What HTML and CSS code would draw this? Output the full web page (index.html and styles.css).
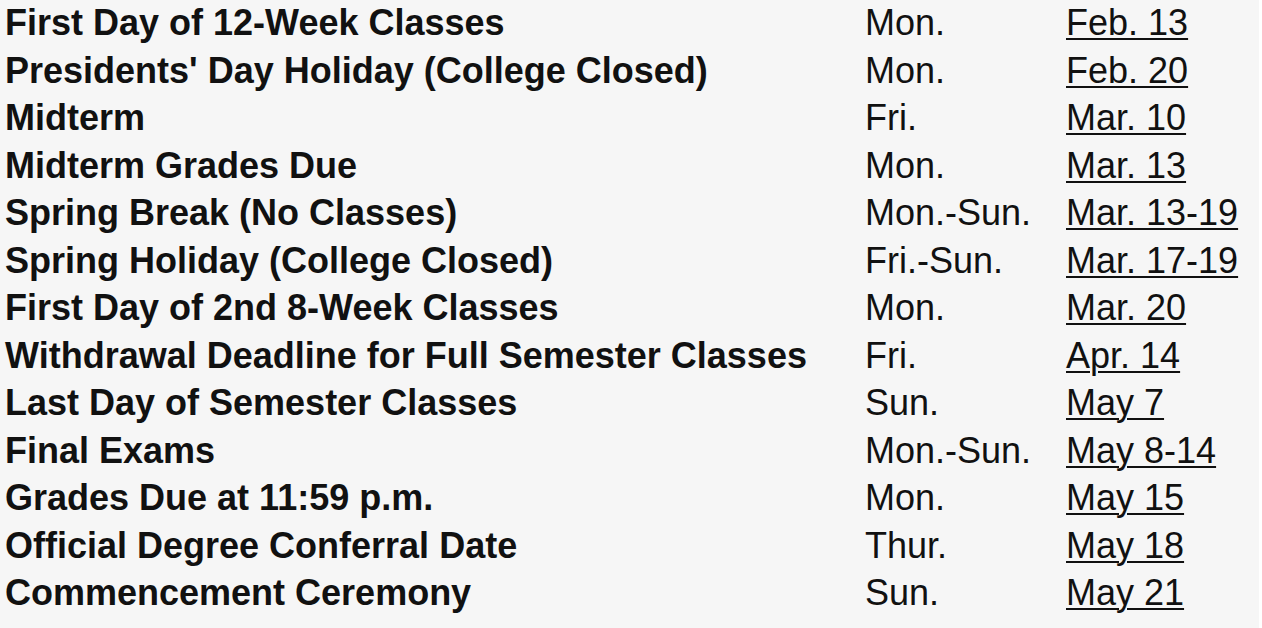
FILE: index.html
```html
<!DOCTYPE html>
<html lang="en">
<head>
<meta charset="utf-8">
<title>Academic Calendar</title>
<link rel="stylesheet" href="styles.css">
</head>
<body>
<div class="sheet">
  <table class="calendar">
    <tbody>
      <tr><th>First Day of 12-Week Classes</th><td class="day">Mon.</td><td class="date"><a href="#">Feb. 13</a></td></tr>
      <tr><th>Presidents' Day Holiday (College Closed)</th><td class="day">Mon.</td><td class="date"><a href="#">Feb. 20</a></td></tr>
      <tr><th>Midterm</th><td class="day">Fri.</td><td class="date"><a href="#">Mar. 10</a></td></tr>
      <tr><th>Midterm Grades Due</th><td class="day">Mon.</td><td class="date"><a href="#">Mar. 13</a></td></tr>
      <tr><th>Spring Break (No Classes)</th><td class="day">Mon.-Sun.</td><td class="date"><a href="#">Mar. 13-19</a></td></tr>
      <tr><th>Spring Holiday (College Closed)</th><td class="day">Fri.-Sun.</td><td class="date"><a href="#">Mar. 17-19</a></td></tr>
      <tr><th>First Day of 2nd 8-Week Classes</th><td class="day">Mon.</td><td class="date"><a href="#">Mar. 20</a></td></tr>
      <tr><th>Withdrawal Deadline for Full Semester Classes</th><td class="day">Fri.</td><td class="date"><a href="#">Apr. 14</a></td></tr>
      <tr><th>Last Day of Semester Classes</th><td class="day">Sun.</td><td class="date"><a href="#">May 7</a></td></tr>
      <tr><th>Final Exams</th><td class="day">Mon.-Sun.</td><td class="date"><a href="#">May 8-14</a></td></tr>
      <tr><th>Grades Due at 11:59 p.m.</th><td class="day">Mon.</td><td class="date"><a href="#">May 15</a></td></tr>
      <tr><th>Official Degree Conferral Date</th><td class="day">Thur.</td><td class="date"><a href="#">May 18</a></td></tr>
      <tr><th>Commencement Ceremony</th><td class="day">Sun.</td><td class="date"><a href="#">May 21</a></td></tr>
    </tbody>
  </table>
</div>
</body>
</html>
```

FILE: styles.css
```css
html, body {
  margin: 0;
  padding: 0;
  background: #ffffff;
}

body {
  font-family: "Liberation Sans", Arial, Helvetica, sans-serif;
  color: #111111;
}

.sheet {
  width: 1259px;
  height: 628px;
  background: #f6f6f6;
  overflow: hidden;
}

.calendar {
  border-collapse: collapse;
  table-layout: fixed;
  font-size: 36px;
  line-height: 47.5px;
  margin-top: -1px;
}

.calendar th,
.calendar td {
  padding: 0;
  white-space: nowrap;
  text-align: left;
  vertical-align: top;
}

.calendar th {
  width: 860px;
  padding-left: 5px;
  font-weight: bold;
}

.calendar .day {
  width: 201px;
  font-weight: normal;
}

.calendar .date a {
  color: #111111;
  text-decoration: underline;
  text-decoration-thickness: 2px;
  text-underline-offset: 3px;
}
```
